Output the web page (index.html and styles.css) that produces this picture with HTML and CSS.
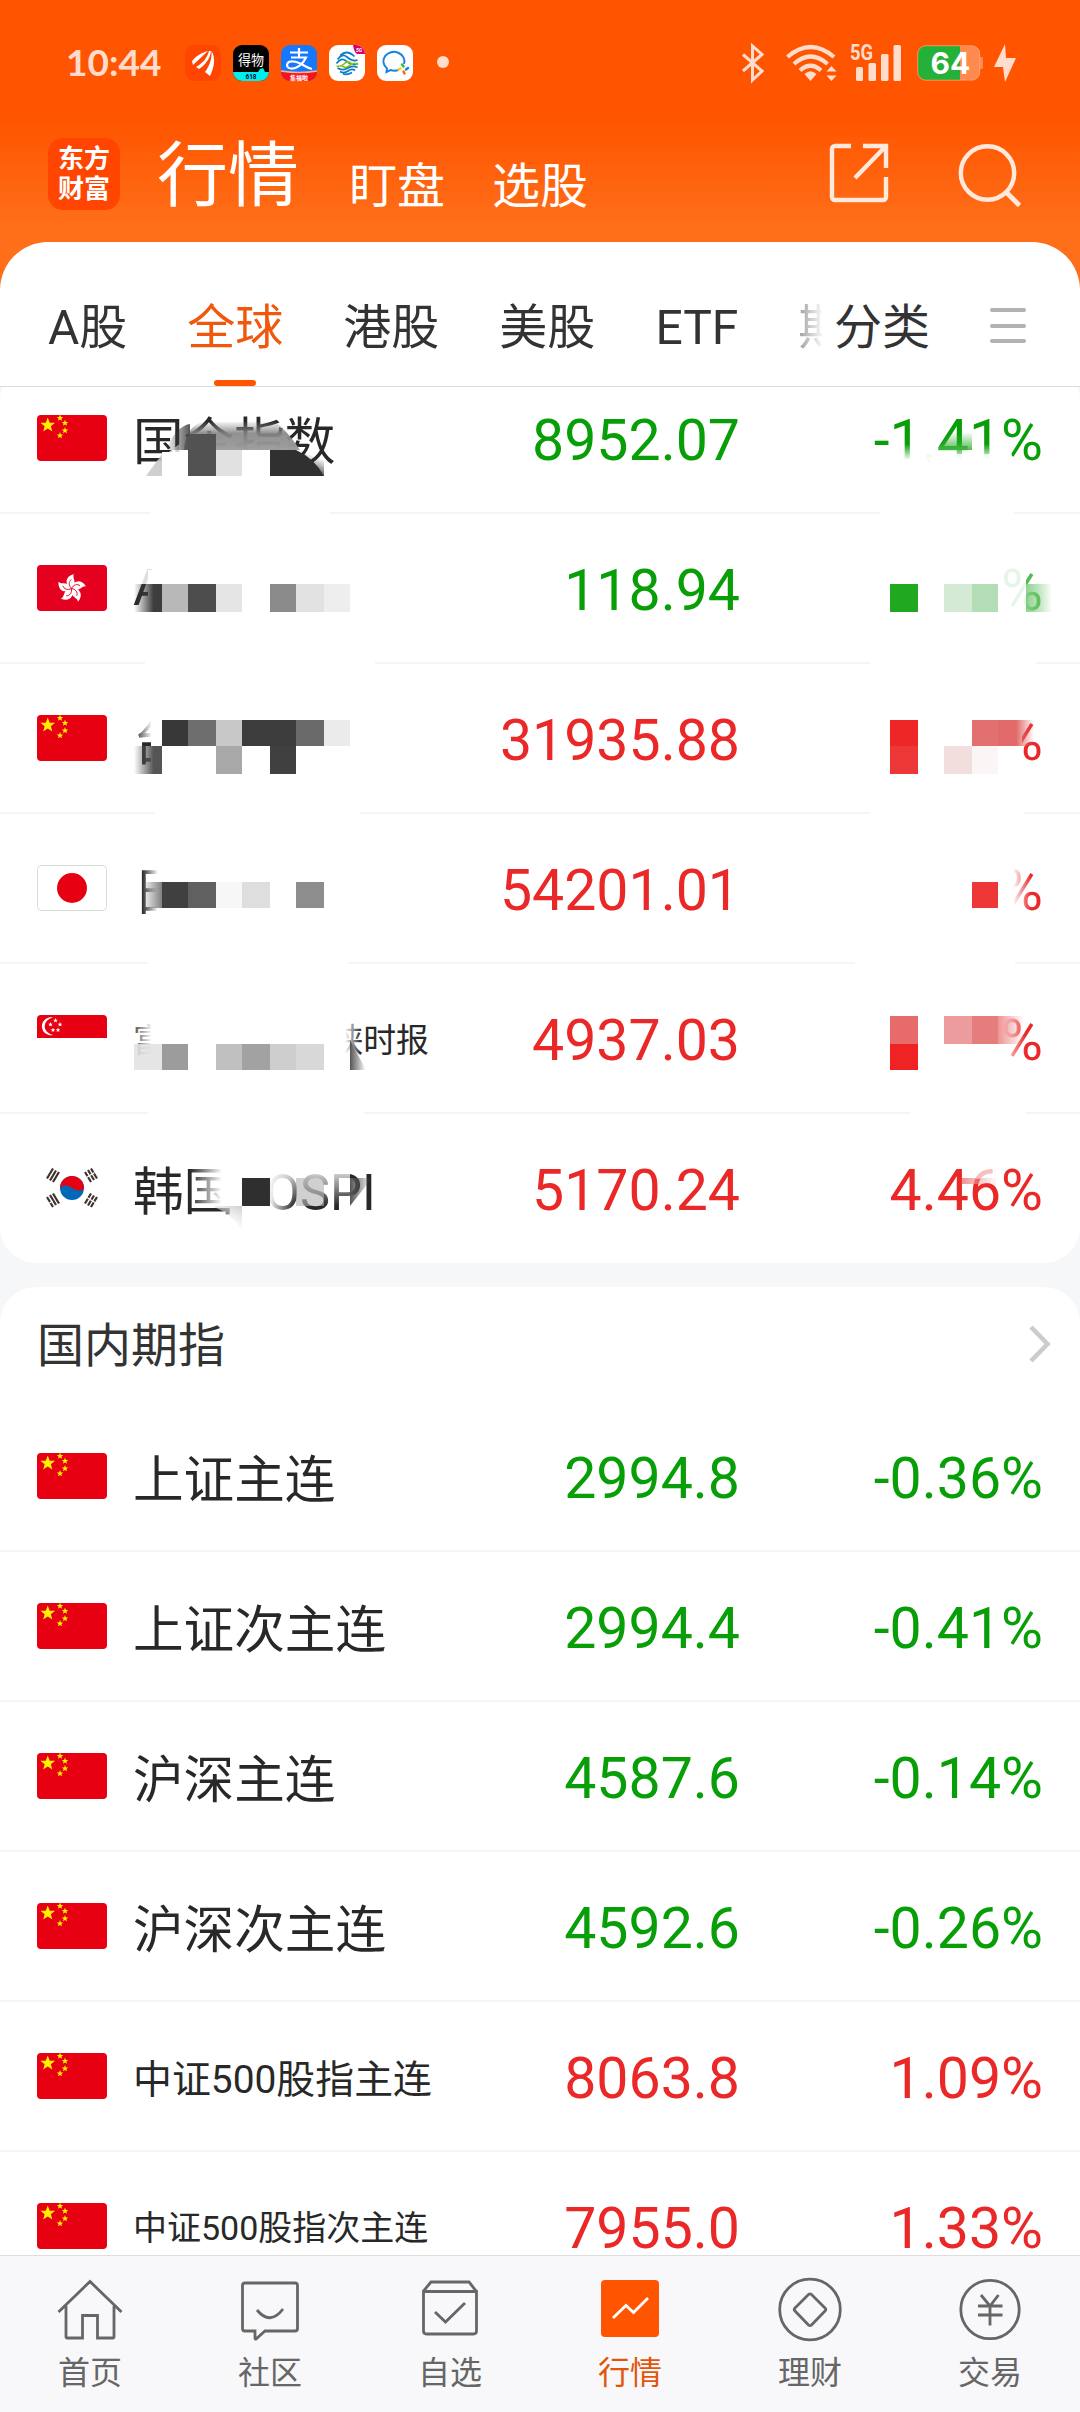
FILE: index.html
```html
<!DOCTYPE html>
<html lang="zh-CN">
<head>
    <meta charset="UTF-8">
    <title>行情</title>
    <link rel="stylesheet" href="styles.css">
</head>
<body>
    <!-- Flags -->
    <svg width="0" height="0" class="defs">
        <defs>
            <symbol id="star" viewBox="-10 -10 20 20">
                <polygon points="0,-10 2.5,-3.100 9.5,-3.100 4,1.400 5.9,8.100 0,4.200 -5.9,8.100 -4,1.400 -9.5,-3.100 -2.5,-3.100"/>
            </symbol>
            <symbol id="cn" viewBox="0 0 70 46">
                <rect width="70" height="46" rx="4" fill="#e60012"/>
                <g fill="#fff000">
                    <use href="#star" x="3" y="2.500" width="15.500" height="15.500"/>
                    <use href="#star" x="19.500" y="-0.500" width="7" height="7"/>
                    <use href="#star" x="24.500" y="4.500" width="7" height="7"/>
                    <use href="#star" x="24.500" y="12" width="7" height="7"/>
                    <use href="#star" x="19.500" y="17" width="7" height="7"/>
                </g>
            </symbol>
            <symbol id="hk" viewBox="0 0 70 46">
                <rect width="70" height="46" rx="4" fill="#e60020"/>
                <g transform="translate(34.500 23.500)">
                    <g id="petals" fill="#fff">
                        <path id="petal" d="M0 0C-7-4-7-12 2.500-14.500C0-10 7-6 0 0Z"/>
                        <use href="#petal" transform="rotate(72)"/>
                        <use href="#petal" transform="rotate(144)"/>
                        <use href="#petal" transform="rotate(216)"/>
                        <use href="#petal" transform="rotate(288)"/>
                    </g>
                    <g fill="none" stroke="#e60020" stroke-width="0.900">
                        <path id="vein" d="M0 0C-3-3-3-7 0-9"/>
                        <use href="#vein" transform="rotate(72)"/>
                        <use href="#vein" transform="rotate(144)"/>
                        <use href="#vein" transform="rotate(216)"/>
                        <use href="#vein" transform="rotate(288)"/>
                    </g>
                </g>
            </symbol>
            <symbol id="jp" viewBox="0 0 70 46">
                <rect x="0.500" y="0.500" width="69" height="45" rx="4" fill="#fff" stroke="#d8dada"/>
                <circle cx="35" cy="23" r="15" fill="#e60012"/>
            </symbol>
            <symbol id="sg" viewBox="0 0 70 46">
                <path d="M0 23V4a4 4 0 0 1 4-4h62a4 4 0 0 1 4 4v19Z" fill="#e60012"/>
                <path d="M16 2.500a9 9 0 1 0 0 17.500a11 9 0 0 1 0-17.500Z" fill="#fff"/>
                <g fill="#fff">
                    <use href="#star" x="16" y="3" width="5" height="5"/>
                    <use href="#star" x="11" y="7" width="5" height="5"/>
                    <use href="#star" x="20.500" y="7" width="5" height="5"/>
                    <use href="#star" x="13.500" y="12.500" width="5" height="5"/>
                    <use href="#star" x="18.500" y="12.500" width="5" height="5"/>
                </g>
            </symbol>
            <symbol id="kr" viewBox="0 0 70 46">
                <circle cx="35" cy="23" r="12" fill="#0068b7"/>
                <path d="M23 23a12 12 0 0 1 24 0c0 4-7 4-12 0c-4-4-11-4-12 0Z" fill="#e60012" transform="rotate(-4 35 23)"/>
                <g stroke="#40322f" stroke-width="2.200">
                    <path d="M10 13.500l6-10M13 15.500l6-10M16 17l6-10"/>
                    <path d="M48 7l6 10M51 5l6 10M54 3.500l6 10"/>
                    <path d="M10 32l6 10M13 30l6 10M16 28.500l6 10"/>
                    <path d="M48 38.500l6-10M51 40.500l6-10M54 42l6-10"/>
                </g>
                <path d="M49.500 12.500l8-5M12.500 38l3-2M50 32.500l8 5" stroke="#fff" stroke-width="1.200"/>
            </symbol>
            <!-- fades used by the mosaic -->
            <linearGradient id="wr"><stop offset="0" stop-color="#fff" stop-opacity="0"/><stop offset="1" stop-color="#fff"/></linearGradient>
            <linearGradient id="wl"><stop offset="0" stop-color="#fff"/><stop offset="1" stop-color="#fff" stop-opacity="0"/></linearGradient>
            <linearGradient id="wd" x2="0" y2="1"><stop offset="0" stop-color="#fff" stop-opacity="0"/><stop offset="1" stop-color="#fff"/></linearGradient>
            <linearGradient id="wu" x2="0" y2="1"><stop offset="0" stop-color="#fff"/><stop offset="1" stop-color="#fff" stop-opacity="0"/></linearGradient>
            <linearGradient id="kr1"><stop offset="0" stop-color="#3d3d3d" stop-opacity="0"/><stop offset="0.700" stop-color="#3d3d3d"/></linearGradient>
            <linearGradient id="kr2"><stop offset="0" stop-color="#555" stop-opacity="0"/><stop offset="0.700" stop-color="#555"/></linearGradient>
            <linearGradient id="kr3"><stop offset="0" stop-color="#808080" stop-opacity="0"/><stop offset="1" stop-color="#808080"/></linearGradient>
            <linearGradient id="kl"><stop offset="0" stop-color="#555"/><stop offset="1" stop-color="#555" stop-opacity="0"/></linearGradient>
            <linearGradient id="top1" x2="0" y2="1"><stop offset="0" stop-color="#8a8a8a" stop-opacity="0.100"/><stop offset="0.400" stop-color="#858585" stop-opacity="0.900"/><stop offset="1" stop-color="#a0a0a0"/></linearGradient>
            <linearGradient id="topl"><stop offset="0" stop-color="#333" stop-opacity="0"/><stop offset="1" stop-color="#444" stop-opacity="0.900"/></linearGradient>
            <linearGradient id="gl"><stop offset="0" stop-color="#87cf87" stop-opacity="0.900"/><stop offset="1" stop-color="#5fc05f" stop-opacity="0"/></linearGradient>
            <linearGradient id="gd" x2="0" y2="1"><stop offset="0" stop-color="#38b038" stop-opacity="0"/><stop offset="1" stop-color="#38b038" stop-opacity="0.850"/></linearGradient>
            <linearGradient id="rl"><stop offset="0" stop-color="#e26969"/><stop offset="0.500" stop-color="#e26969"/><stop offset="1" stop-color="#e26969" stop-opacity="0"/></linearGradient>
            <linearGradient id="rl2"><stop offset="0" stop-color="#ee9393"/><stop offset="1" stop-color="#ee9393" stop-opacity="0"/></linearGradient>
            <linearGradient id="corner" x1="0.450" y1="0.750" x2="0.850" y2="0.250"><stop offset="0" stop-color="#303030"/><stop offset="1" stop-color="#303030" stop-opacity="0"/></linearGradient>
            <linearGradient id="tail" x1="1" y1="0" x2="0.400" y2="1"><stop offset="0" stop-color="#ccc"/><stop offset="1" stop-color="#fff" stop-opacity="0"/></linearGradient>
        </defs>
    </svg>

    <div class="top">
        <!-- Status bar -->
        <div class="status">
            <span class="clock">10:44</span>
            <div class="apps">
                <svg width="36" height="36" viewBox="0 0 36 36">
                    <rect width="36" height="36" rx="9" fill="#ff4500"/>
                    <path d="M7 16C12 10 18 7 23 6C18 11 13 15 8 20ZM11 22C18 18 22 13 24 6L26 6C25 14 20 20 14 24ZM20 27C25 20 27 13 26.500 6C31 13 29 23 25 31Z" fill="#fff"/>
                </svg>
                <svg width="36" height="36" viewBox="0 0 36 36">
                    <rect width="36" height="36" rx="9" fill="#000"/>
                    <path d="M0 27h25l2-3 3-1 2 4h4a9 9 0 0 1-9 9H9a9 9 0 0 1-9-9Z" fill="#00eeec"/>
                    <text x="5" y="20" class="dewu" textLength="26" lengthAdjust="spacingAndGlyphs">得物</text>
                    <text x="12.500" y="34" class="dewu-sub" textLength="11" lengthAdjust="spacingAndGlyphs">618</text>
                </svg>
                <svg width="36" height="36" viewBox="0 0 36 36">
                    <rect width="36" height="36" rx="9" fill="#1677ff"/>
                    <path d="M0 26q18 3 36 0v1a9 9 0 0 1-9 9H9a9 9 0 0 1-9-9Z" fill="#f5141e"/>
                    <path d="M0 26q18 3 36 0" stroke="#f6b48c" stroke-width="1.500" fill="none"/>
                    <path d="M9 7.500h18M18 3v9M10 12.500h15C22 19 16 24 10 23.500C4 23 5 16 12 16.500C20 17 23 22 31 24" stroke="#fff" stroke-width="2.200" fill="none"/>
                    <text x="9" y="34.500" class="ali-sub" textLength="18">集福啦</text>
                </svg>
                <svg width="36" height="36" viewBox="0 0 36 36">
                    <rect width="36" height="36" rx="9" fill="#fff"/>
                    <path d="M24 0h3a9 9 0 0 1 9 9h-8q-3-2-4-9Z" fill="#d6006d"/>
                    <text x="27" y="7" class="five-g">5G</text>
                    <g fill="none" stroke-width="1.700">
                        <path d="M11 10.500Q18 4 25.500 11.500M8.500 14.500Q13 8 18 12Q24 17 28.500 15" stroke="#0a7fc4"/>
                        <path d="M7.500 18.500Q12 12 17 16Q23 21 29 18.500" stroke="#0a7fc4"/>
                        <path d="M7.500 21Q12 22 15 19Q19 15 23 19" stroke="#8cc21f"/>
                        <path d="M13 21Q17 24 21 20Q25 17 29 19.500" stroke="#8cc21f"/>
                        <path d="M8.500 23Q13 26 18 23.500Q24 20 28.500 22.500M11 26.500Q15 29 19 26Q23 23 26 25.500M14 29q5 1 9-1.500" stroke="#0a7fc4"/>
                    </g>
                </svg>
                <svg width="36" height="36" viewBox="0 0 36 36">
                    <rect width="36" height="36" rx="9" fill="#fff"/>
                    <path d="M27 19A10.500 9.500 0 1 0 10 23.500L9.500 27l4-2q4 1.500 8 0" fill="none" stroke="#1b84dc" stroke-width="2"/>
                    <g fill="none" stroke-width="2.400" stroke-linecap="round">
                        <path d="M25 19.500l1.500 2" stroke="#2cbc3c"/><path d="M31 23l-2 1.500" stroke="#1b84dc"/>
                        <path d="M27.500 28.500l-1-2" stroke="#fb6500"/><path d="M21.500 24.500l2-1" stroke="#ffcc00"/>
                    </g>
                </svg>
            </div>
            <span class="dot"></span>
            <div class="signals">
                <svg width="22" height="38" viewBox="0 0 22 38">
                    <path d="M1 10.500L20 27L10.500 36V2L20 10.500L1 27" fill="none" stroke="#ffdccb" stroke-width="3"/>
                </svg>
                <svg width="51" height="38" viewBox="0 0 51 38" class="wifi">
                    <g fill="none" stroke="#ffdccb" stroke-width="4.200">
                        <path d="M1.500 13Q24.500-7 48 13"/>
                        <path d="M8 20Q24.500 5 41.500 20"/>
                        <path d="M14 26.500Q24.500 17 35 26.500"/>
                    </g>
                    <path d="M24.500 37l-6-7q6-5.500 12 0ZM45.500 22l5 5.500h-10ZM45.500 37l5-5.500h-10Z" fill="#ffdccb"/>
                </svg>
                <svg width="51" height="38" viewBox="0 0 51 38" class="bars">
                    <text x="0" y="16" class="net" textLength="23" lengthAdjust="spacingAndGlyphs">5G</text>
                    <g fill="#ffdccb">
                        <rect x="6" y="23" width="7" height="14" rx="1.500"/><rect x="18.500" y="19" width="7.500" height="18" rx="1.500"/>
                        <rect x="31" y="10" width="7.500" height="27" rx="1.500"/><rect x="43.500" y="1" width="7.500" height="36" rx="1.500"/>
                    </g>
                </svg>
                <svg width="67" height="36" viewBox="0 0 67 36" class="battery">
                    <path d="M43 1h12a8 8 0 0 1 8 8v3h2q1 0 1 2v8q0 2-1 2h-2v3a8 8 0 0 1-8 8H43Z" fill="#ff8a50"/>
                    <path d="M43 1H9a8 8 0 0 0-8 8v18a8 8 0 0 0 8 8h34Z" fill="#25b137"/>
                    <rect x="0.700" y="0.700" width="62" height="34.500" rx="8" fill="none" stroke="#ffad85" stroke-opacity="0.700"/>
                    <text x="13.500" y="29" class="level">64</text>
                </svg>
                <svg width="22" height="38" viewBox="0 0 22 38">
                    <path d="M11 0L0 23h9l2 15L22 14h-10Z" fill="#ffdccb"/>
                </svg>
            </div>
        </div>

        <!-- Header -->
        <div class="header">
            <div class="logo"><span>东方</span><span>财富</span></div>
            <span class="title">行情</span>
            <span class="sub">盯盘</span>
            <span class="sub">选股</span>
            <div class="actions">
                <svg width="60" height="60" viewBox="0 0 60 60">
                    <path d="M22 3H6a3 3 0 0 0-3 3v48a3 3 0 0 0 3 3h48a3 3 0 0 0 3-3V34M34 3h23v22M57 3L26 35" fill="none" stroke="#ffe9dc" stroke-width="4.400"/>
                </svg>
                <svg width="64" height="64" viewBox="0 0 64 64">
                    <circle cx="29.500" cy="30" r="26.700" fill="none" stroke="#ffe9dc" stroke-width="4.400"/>
                    <path d="M48 49L61.500 62.500" stroke="#ffe9dc" stroke-width="4.800"/>
                </svg>
            </div>
        </div>
    </div>

    <!-- Tabs -->
    <div class="tabs">
        <div class="tab-list">
            <span>A股</span>
            <span class="active">全球</span>
            <span>港股</span>
            <span>美股</span>
            <span>ETF</span>
            <span>期</span>
        </div>
        <span class="category">分类</span>
        <div class="menu"><i></i><i></i><i></i></div>
    </div>

    <!-- Global indexes -->
    <div class="scroll">
        <div class="card first">
            <div class="row down">
                <svg class="flag"><use href="#cn"/></svg>
                <span class="name">国企指数</span>
                <span class="price">8952.07</span>
                <span class="pct">-1.41%</span>
                <svg class="mosaic" viewBox="0 0 1080 150">
                    <path d="M156 98L182 78V112H150Z" fill="#fff" fill-opacity="0.800"/>
                    <path d="M184 84Q188 60 204 58H276Q288 68 300 86H184Z" fill="url(#top1)"/>
                    <path d="M166 86Q176 62 190 60V86Z" fill="url(#topl)"/>
                    <rect x="188" y="70" width="28" height="42" fill="#525252"/>
                    <rect x="216" y="86" width="26" height="26" fill="#e1e1e1"/>
                    <rect x="242" y="86" width="28" height="26" fill="#fff"/>
                    <path d="M270 86h26q18 8 28 26h-54Z" fill="#303030"/>
                    <rect x="270" y="86" width="54" height="26" fill="url(#corner)"/>
                    <rect x="162" y="88" width="26" height="26" fill="#fff"/>
                    <path d="M146 112l16-22v22Z" fill="#bbb" fill-opacity="0.700"/>
                    <rect x="900" y="80" width="105" height="16" fill="url(#wd)"/>
                    <path d="M938 86l12-18h22v18Z" fill="url(#gd)"/>
                    <rect x="912" y="90" width="100" height="12" fill="#fff" fill-opacity="0.750"/>
                    <rect x="150" y="146" width="180" height="4" fill="#fff"/><rect x="880" y="146" width="134" height="4" fill="#fff"/>
                </svg>
            </div>
            <div class="row down">
                <svg class="flag"><use href="#hk"/></svg>
                <span class="name">A</span>
                <span class="price">118.94</span>
                <span class="pct">%</span>
                <svg class="mosaic" viewBox="0 0 1080 150">
                    <rect x="130" y="52" width="42" height="18" fill="#fff" fill-opacity="0.850"/>
                    <rect x="148" y="56" width="30" height="44" fill="#fff"/>
                    <rect x="134" y="70" width="28" height="28" fill="url(#kr1)"/>
                    <rect x="162" y="70" width="26" height="28" fill="#b8b8b8"/>
                    <rect x="188" y="70" width="28" height="28" fill="#4d4d4d"/>
                    <rect x="216" y="70" width="26" height="28" fill="#e5e5e5"/>
                    <rect x="270" y="70" width="26" height="28" fill="#8b8b8b"/>
                    <rect x="296" y="70" width="28" height="28" fill="#e2e2e2"/>
                    <rect x="324" y="70" width="26" height="28" fill="#eee"/>
                    <rect x="1000" y="50" width="26" height="50" fill="#fff" fill-opacity="0.900"/>
                    <rect x="1024" y="50" width="24" height="50" fill="#fff" fill-opacity="0.300"/>
                    <rect x="890" y="70" width="28" height="28" fill="#20a920"/>
                    <rect x="944" y="70" width="28" height="28" fill="#d4ead5"/>
                    <rect x="972" y="70" width="26" height="28" fill="#b3deb5"/>
                    <rect x="1026" y="70" width="26" height="28" fill="url(#gl)"/>
                    <rect x="145" y="146" width="230" height="4" fill="#fff"/><rect x="870" y="146" width="166" height="4" fill="#fff"/>
                </svg>
            </div>
            <div class="row up">
                <svg class="flag"><use href="#cn"/></svg>
                <span class="name">台</span>
                <span class="price">31935.88</span>
                <span class="pct">%</span>
                <svg class="mosaic" viewBox="0 0 1080 150">
                    <rect x="134" y="48" width="18" height="30" fill="url(#wr)"/>
                    <rect x="151" y="48" width="38" height="56" fill="#fff"/>
                    <rect x="134" y="82" width="28" height="28" fill="url(#kr2)"/>
                    <rect x="162" y="56" width="26" height="26" fill="#383838"/>
                    <rect x="188" y="56" width="28" height="26" fill="#6e6e6e"/>
                    <rect x="216" y="56" width="26" height="26" fill="#c8c8c8"/>
                    <rect x="242" y="56" width="54" height="26" fill="#3c3c3c"/>
                    <rect x="296" y="56" width="28" height="26" fill="#696969"/>
                    <rect x="324" y="56" width="26" height="26" fill="#ebebeb"/>
                    <rect x="216" y="82" width="26" height="28" fill="#a8a8a8"/>
                    <rect x="270" y="82" width="26" height="28" fill="#404040"/>
                    <rect x="996" y="50" width="26" height="50" fill="#fff"/>
                    <rect x="890" y="56" width="28" height="26" fill="#ef2626"/>
                    <rect x="890" y="82" width="28" height="28" fill="#ee3737"/>
                    <rect x="972" y="56" width="26" height="26" fill="#e37070"/>
                    <rect x="998" y="56" width="36" height="26" fill="url(#rl)"/>
                    <rect x="944" y="82" width="28" height="28" fill="#f3dede"/>
                    <rect x="972" y="82" width="26" height="28" fill="#fbf6f6"/>
                    <rect x="155" y="146" width="205" height="4" fill="#fff"/><rect x="870" y="146" width="154" height="4" fill="#fff"/>
                </svg>
            </div>
            <div class="row up">
                <svg class="flag"><use href="#jp"/></svg>
                <span class="name">日</span>
                <span class="price">54201.01</span>
                <span class="pct">%</span>
                <svg class="mosaic" viewBox="0 0 1080 150">
                    <rect x="142" y="48" width="16" height="54" fill="url(#wr)"/>
                    <rect x="157" y="48" width="32" height="56" fill="#fff"/>
                    <rect x="142" y="68" width="20" height="26" fill="url(#kr3)"/>
                    <rect x="162" y="68" width="26" height="26" fill="#404040"/>
                    <rect x="188" y="68" width="28" height="26" fill="#606060"/>
                    <rect x="216" y="68" width="26" height="26" fill="#f7f7f7"/>
                    <rect x="242" y="68" width="28" height="26" fill="#dedede"/>
                    <rect x="296" y="68" width="28" height="26" fill="#8d8d8d"/>
                    <rect x="1013" y="50" width="18" height="50" fill="url(#wl)"/>
                    <rect x="998" y="50" width="16" height="50" fill="#fff"/>
                    <rect x="972" y="68" width="26" height="26" fill="#ee3737"/>
                    <rect x="148" y="146" width="200" height="4" fill="#fff"/><rect x="855" y="146" width="160" height="4" fill="#fff"/>
                </svg>
            </div>
            <div class="row up">
                <svg class="flag"><use href="#sg"/></svg>
                <span class="name small">富时新加坡海峡时报</span>
                <span class="price">4937.03</span>
                <span class="pct">%</span>
                <svg class="mosaic" viewBox="0 0 1080 150">
                    <rect x="130" y="50" width="22" height="50" fill="url(#wr)"/>
                    <rect x="151" y="50" width="194" height="50" fill="#fff"/>
                    <rect x="345" y="50" width="16" height="50" fill="url(#wl)"/>
                    <rect x="134" y="80" width="28" height="26" fill="#e0e0e0" fill-opacity="0.850"/>
                    <rect x="162" y="80" width="26" height="26" fill="#9c9c9c"/>
                    <rect x="216" y="80" width="26" height="26" fill="#c0c0c0"/>
                    <rect x="242" y="80" width="28" height="26" fill="#a2a2a2"/>
                    <rect x="270" y="80" width="26" height="26" fill="#cecece"/>
                    <rect x="296" y="80" width="28" height="26" fill="#d8d8d8"/>
                    <path d="M350 106V76l16 30Z" fill="url(#kl)"/>
                    <rect x="1000" y="50" width="26" height="50" fill="url(#wl)"/>
                    <rect x="890" y="52" width="28" height="28" fill="#e86b6b"/>
                    <rect x="890" y="80" width="28" height="26" fill="#ef2323"/>
                    <rect x="944" y="52" width="28" height="28" fill="#ec9c9c"/>
                    <rect x="972" y="52" width="26" height="28" fill="#e67d7d"/>
                    <rect x="998" y="52" width="26" height="28" fill="url(#rl2)"/>
                    <rect x="148" y="146" width="216" height="4" fill="#fff"/><rect x="910" y="146" width="116" height="4" fill="#fff"/>
                </svg>
            </div>
            <div class="row up">
                <svg class="flag"><use href="#kr"/></svg>
                <span class="name">韩国KOSPI</span>
                <span class="price">5170.24</span>
                <span class="pct">4.46%</span>
                <svg class="mosaic" viewBox="0 0 1080 150">
                    <rect x="190" y="50" width="32" height="42" fill="url(#wr)"/>
                    <rect x="221" y="50" width="22" height="44" fill="#fff"/>
                    <rect x="234" y="50" width="36" height="54" fill="#fff"/>
                    <path d="M212 92h30v24q-10-16-30-24Z" fill="url(#tail)"/>
                    <rect x="268" y="50" width="82" height="42" fill="url(#wu)"/>
                    <rect x="268" y="50" width="26" height="50" fill="url(#wl)"/>
                    <rect x="242" y="64" width="28" height="28" fill="#2f2f2f"/>
                    <rect x="296" y="64" width="28" height="28" fill="#b0b0b0" fill-opacity="0.600"/>
                    <path d="M350 64h22l-22 28Z" fill="url(#kl)"/>
                    <rect x="962" y="53" width="36" height="12" fill="#fff" fill-opacity="0.700"/>
                    <rect x="962" y="64" width="36" height="6" fill="url(#rl2)"/>
                </svg>
            </div>
        </div>

        <!-- Domestic futures -->
        <div class="card">
            <div class="card-title">
                <span>国内期指</span>
                <svg width="24" height="40" viewBox="0 0 24 40"><path d="M3 3L19.500 20L3 37" fill="none" stroke="#ccc" stroke-width="4.600"/></svg>
            </div>
            <div class="row down"><svg class="flag"><use href="#cn"/></svg><span class="name">上证主连</span><span class="price">2994.8</span><span class="pct">-0.36%</span></div>
            <div class="row down"><svg class="flag"><use href="#cn"/></svg><span class="name">上证次主连</span><span class="price">2994.4</span><span class="pct">-0.41%</span></div>
            <div class="row down"><svg class="flag"><use href="#cn"/></svg><span class="name">沪深主连</span><span class="price">4587.6</span><span class="pct">-0.14%</span></div>
            <div class="row down"><svg class="flag"><use href="#cn"/></svg><span class="name">沪深次主连</span><span class="price">4592.6</span><span class="pct">-0.26%</span></div>
            <div class="row up"><svg class="flag"><use href="#cn"/></svg><span class="name medium">中证500股指主连</span><span class="price">8063.8</span><span class="pct">1.09%</span></div>
            <div class="row up"><svg class="flag"><use href="#cn"/></svg><span class="name compact">中证500股指次主连</span><span class="price">7955.0</span><span class="pct">1.33%</span></div>
        </div>
    </div>

    <!-- Bottom navigation -->
    <div class="nav">
        <div class="nav-item">
            <svg viewBox="0 0 66 66"><path d="M1.500 34L33 3.500L64.500 34M9 28v31q0 1 1 1h15.500V37.500h15V60H56q1 0 1-1V28"/></svg>
            <span>首页</span>
        </div>
        <div class="nav-item">
            <svg viewBox="0 0 66 66"><path d="M8 5h50q2.500 0 2.500 2.500v43q0 2.500-2.500 2.500H28l-9 8q-1 .500-1-1v-7H8q-2.500 0-2.500-2.500v-43Q5.500 5 8 5ZM20 32q13 16 26-1"/></svg>
            <span>社区</span>
        </div>
        <div class="nav-item">
            <svg viewBox="0 0 66 66"><path d="M6.500 13.500h53V53q0 3-3 3h-47q-3 0-3-3V13L14 4h38l7.500 9.500M18 34l10.500 10L48 25"/></svg>
            <span>自选</span>
        </div>
        <div class="nav-item active">
            <svg viewBox="0 0 66 66"><rect x="4" y="2" width="58" height="57" rx="4" fill="#ff5500" stroke="none"/><path d="M16 40L29 27.500L36.500 34.500L51 20" stroke="#fff"/></svg>
            <span>行情</span>
        </div>
        <div class="nav-item">
            <svg viewBox="0 0 66 66"><circle cx="33" cy="31.500" r="30.300"/><path d="M31.500 16.500q1.500-1.300 3 0L48 30q1.500 1.500 0 3L34.500 47q-1.500 1.300-3 0L18 33q-1.500-1.500 0-3Z"/></svg>
            <span>理财</span>
        </div>
        <div class="nav-item">
            <svg viewBox="0 0 66 66"><circle cx="33" cy="31.500" r="29.200"/><path d="M24 17l9 11l8.500-11M21 28h24.500M21 37h24.500M33 28v19.500"/></svg>
            <span>交易</span>
        </div>
    </div>
</body>
</html>
```

FILE: styles.css
```css
* {
    box-sizing: border-box;
}

body {
    margin: 0;
    width: 1080px;
    height: 2412px;
    overflow: hidden;
    display: flex;
    flex-direction: column;
    font-family: Roboto, "Noto Sans CJK SC", sans-serif;
    background-color: #f6f7f9;
    color: #333;
}

svg {
    display: block;
    flex: none;
    overflow: visible;
}

.defs {
    position: absolute;
}

.top {
    height: 290px;
    flex: none;
    background: linear-gradient(#ff5500 0, #ff5500 120px, #ff6e19 225px, #ff6e19 100%);
}

/* Status bar */
.status {
    height: 124px;
    display: flex;
    align-items: center;
    padding-left: 66px;
    padding-right: 63px;
}

.clock {
    width: 119px;
    padding-bottom: 2px;
    font: 700 37px Lato, sans-serif;
    color: #ffdccb;
}

.apps {
    display: flex;
    gap: 12px;
    padding-top: 2px;
}

.dewu {
    font: 400 14px "Noto Sans CJK SC", sans-serif;
    fill: #fff;
}

.dewu-sub {
    font: 700 8px Roboto, sans-serif;
    fill: #003;
}

.ali-sub {
    font: 700 6px "Noto Sans CJK SC", sans-serif;
    fill: #fff;
}

.five-g {
    font: italic 700 5px Roboto, sans-serif;
    fill: #fff;
}

.dot {
    width: 12px;
    height: 12px;
    margin-left: 24px;
    border-radius: 50%;
    background-color: #ffdccb;
}

.signals {
    display: flex;
    align-items: center;
    margin-left: auto;
    padding-right: 1px;
    padding-top: 1px;
}

.wifi {
    margin-left: 22px;
}

.bars {
    margin-left: 13px;
}

.battery {
    margin-left: 16px;
    margin-right: 10px;
}

.net {
    font: 700 22px Roboto, sans-serif;
    fill: #ffdccb;
}

.level {
    font: 700 30px Inter, sans-serif;
    fill: #fff;
}

/* Header */
.header {
    height: 118px;
    display: flex;
    padding-left: 48px;
    padding-right: 58px;
    color: #fff;
}

.logo {
    width: 72px;
    height: 72px;
    margin-top: 14px;
    border-radius: 15px;
    background-color: #ff4500;
    display: flex;
    flex-direction: column;
    align-items: center;
    justify-content: center;
    font-size: 26px;
    font-weight: 700;
    line-height: 30px;
}

.title {
    margin-left: 37px;
    width: 192px;
    font-size: 71px;
    line-height: 104px;
}

.sub {
    width: 143px;
    font-size: 48px;
    line-height: 125px;
}

.actions {
    margin-left: auto;
    display: flex;
    gap: 69px;
    padding-top: 19px;
}

/* Tabs */
.tabs {
    height: 145px;
    flex: none;
    margin-top: -48px;
    display: flex;
    background-color: #fff;
    border-radius: 48px 48px 0 0;
    border-bottom: 1px solid #dcdcdc;
    font-size: 48px;
    line-height: 172px;
    white-space: nowrap;
}

.tab-list {
    width: 822px;
    height: 144px;
    padding-left: 48px;
    display: flex;
    gap: 60px;
    overflow: hidden;
    -webkit-mask-image: linear-gradient(90deg, #000 770px, transparent 824px);
    mask-image: linear-gradient(90deg, #000 770px, transparent 824px);
}

.tabs .active {
    color: #f0590d;
    display: flex;
    flex-direction: column;
    align-items: center;
}

.tabs .active::after {
    content: "";
    width: 42px;
    height: 6px;
    margin-top: -34px;
    border-radius: 3px;
    background-color: #ff5500;
}

.category {
    margin-left: 12px;
}

.menu {
    margin-left: 60px;
    padding-top: 66px;
    display: flex;
    flex-direction: column;
    gap: 11.500px;
}

.menu i {
    width: 36px;
    height: 4px;
    border-radius: 2px;
    background-color: #b2b2b2;
}

/* Lists */
.scroll {
    height: 1868px;
    flex: none;
    overflow: hidden;
}

.card {
    background-color: #fff;
    border-radius: 36px;
    margin-bottom: 24px;
}

.card.first {
    margin-top: -23px;
    height: 899px;
}

.card-title {
    height: 115px;
    display: flex;
    justify-content: space-between;
    padding-left: 37px;
    padding-right: 28px;
    font-size: 47px;
    line-height: 118px;
}

.card-title svg {
    margin-top: 37px;
}

.row {
    position: relative;
    height: 150px;
    display: flex;
    align-items: center;
    padding-left: 37px;
    padding-right: 37px;
    border-bottom: 2px solid #f5f5f5;
}

.row:last-child {
    border-bottom-color: transparent;
}

.flag {
    width: 70px;
    height: 46px;
}

.name {
    width: 326px;
    margin-left: 26px;
    padding-bottom: 1px;
    font-size: 50.600px;
    color: #282828;
    white-space: nowrap;
}

.name.medium {
    font-size: 38.900px;
}

.name.compact {
    font-size: 34px;
}

.name.small {
    font-size: 32.900px;
}

.price,
.pct {
    padding-top: 4px;
    font-size: 57.200px;
    text-align: right;
}

.price {
    width: 281px;
}

.pct {
    margin-left: auto;
}

.up {
    color: #ea2828;
}

.down {
    color: #089e08;
}

.mosaic {
    position: absolute;
    left: 0;
    top: 0;
    width: 1080px;
    height: 150px;
}

/* Bottom navigation */
.nav {
    flex: 1;
    display: flex;
    background-color: #f8f8fa;
    border-top: 1px solid #dedede;
}

.nav-item {
    flex: 1;
    display: flex;
    flex-direction: column;
    align-items: center;
    padding-top: 22px;
    font-size: 32px;
    color: #666;
}

.nav-item svg {
    width: 66px;
    height: 66px;
    fill: none;
    stroke: #666;
    stroke-width: 2.800;
}

.nav-item span {
    line-height: 48px;
    margin-top: 5px;
}

.nav .active {
    color: #e2560c;
}
```
